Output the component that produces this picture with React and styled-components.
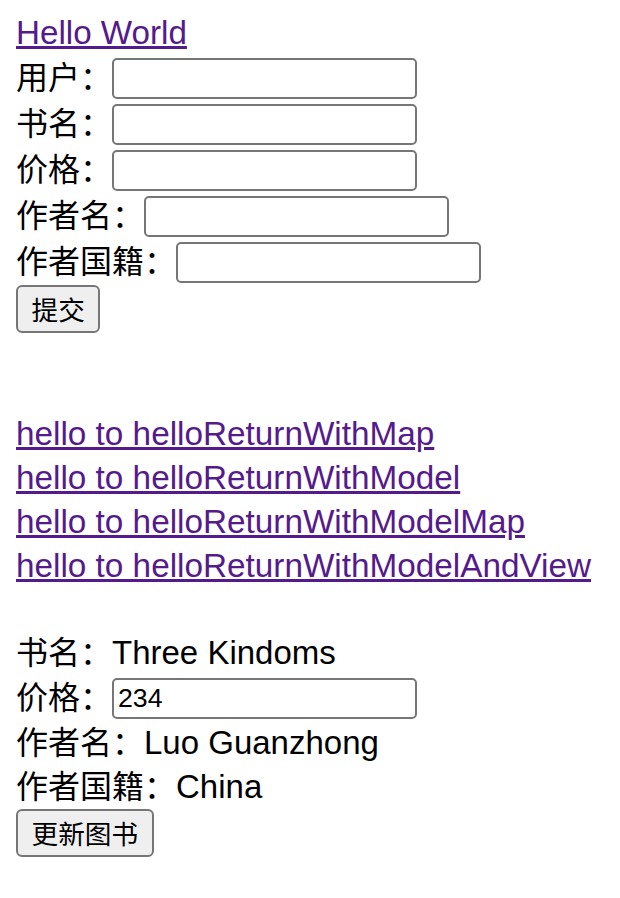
import React from 'react';
import styled, { createGlobalStyle } from 'styled-components';

const GlobalStyle = createGlobalStyle`
  html, body {
    margin: 0;
    padding: 0;
    background: #ffffff;
  }
  body {
    font-family: "Liberation Sans", "Noto Sans CJK SC", sans-serif;
    color: #000000;
  }
`;

const Page = styled.div`
  padding: 16px 16px 0;
  font-size: 32px;
  display: flex;
  flex-direction: column;
  align-items: flex-start;
`;

const TitleLink = styled.a`
  display: block;
  font-size: 33.2px;
  line-height: 32px;
  color: #551a8b;
  text-decoration: underline;
  margin-top: 1px;
  margin-bottom: 6px;
`;

const Form = styled.form`
  display: flex;
  flex-direction: column;
  align-items: flex-start;
  margin: 0;
`;

const FieldRow = styled.label`
  display: flex;
  align-items: center;
  height: 46px;
`;

const Label = styled.span`
  font-size: 32px;
  line-height: 32px;
  font-family: "Liberation Sans", "Noto Sans CJK SC", sans-serif;
`;

const TextInput = styled.input`
  box-sizing: border-box;
  width: 305px;
  height: 41px;
  margin: 0;
  padding: 0 4px;
  border: 2px solid #767676;
  border-radius: 5px;
  background: #ffffff;
  font-family: "Liberation Sans", sans-serif;
  font-size: 26.67px;
  color: #000000;
  outline: none;
`;

const PlainButton = styled.button`
  box-sizing: border-box;
  height: 48px;
  margin: 0;
  padding: 0 13.5px;
  border: 2px solid #767676;
  border-radius: 6px;
  background: #efefef;
  font-family: "Noto Sans CJK SC", sans-serif;
  font-size: 26.67px;
  line-height: 1;
  color: #000000;
`;

const LinkList = styled.div`
  margin-top: 79px;
  display: flex;
  flex-direction: column;
  align-items: flex-start;
`;

const NavLink = styled.a`
  display: block;
  font-size: 33.3px;
  line-height: 44px;
  color: #551a8b;
  text-decoration: underline;
`;

const BookInfo = styled.div`
  margin-top: 43px;
  display: flex;
  flex-direction: column;
  align-items: flex-start;
`;

const InfoRow = styled.div`
  display: block;
  height: 44px;
  line-height: 44px;
  white-space: nowrap;
`;

const Value = styled.span`
  font-size: 33px;
`;

const formFields = [
  { label: '用户：', name: 'user' },
  { label: '书名：', name: 'bookName' },
  { label: '价格：', name: 'price' },
  { label: '作者名：', name: 'authorName' },
  { label: '作者国籍：', name: 'authorNation' },
];

const links = [
  'hello to helloReturnWithMap',
  'hello to helloReturnWithModel',
  'hello to helloReturnWithModelMap',
  'hello to helloReturnWithModelAndView',
];

export default function App() {
  return (
    <>
      <GlobalStyle />
      <Page>
        <TitleLink href="#hello">Hello World</TitleLink>
        <Form onSubmit={(e) => e.preventDefault()}>
          {formFields.map((f) => (
            <FieldRow key={f.name}>
              <Label>{f.label}</Label>
              <TextInput type="text" name={f.name} />
            </FieldRow>
          ))}
          <PlainButton type="submit">提交</PlainButton>
        </Form>
        <LinkList>
          {links.map((l) => (
            <NavLink key={l} href="#link">
              {l}
            </NavLink>
          ))}
        </LinkList>
        <BookInfo>
          <InfoRow>
            书名：<Value>Three Kindoms</Value>
          </InfoRow>
          <FieldRow as="div">
            <Label>价格：</Label>
            <TextInput type="text" defaultValue="234" />
          </FieldRow>
          <InfoRow>
            作者名：<Value>Luo Guanzhong</Value>
          </InfoRow>
          <InfoRow>
            作者国籍：<Value>China</Value>
          </InfoRow>
          <PlainButton type="button">更新图书</PlainButton>
        </BookInfo>
      </Page>
    </>
  );
}
